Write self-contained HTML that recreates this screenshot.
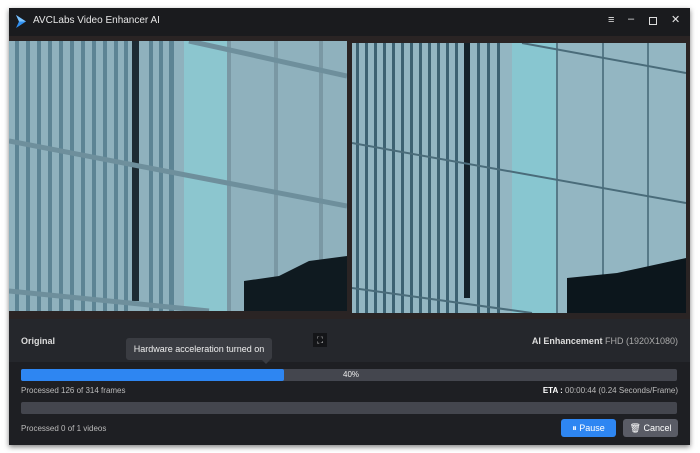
<!DOCTYPE html>
<html><head><meta charset="utf-8"><style>
body{margin:0;width:700px;height:453px;background:#fff;font-family:"Liberation Sans",sans-serif;position:relative;overflow:hidden}
.win{position:absolute;left:9px;top:8px;width:681px;height:437px;background:#1e1f23;box-shadow:0 2px 5px rgba(0,0,0,.5)}
.title{position:absolute;left:0;top:0;width:681px;height:28px;background:#1a1b1e;color:#e6e6e6;font-size:11px}
.t{position:absolute;font-size:9px;color:#ddd;white-space:nowrap}
.bar{position:absolute;left:12px;width:656px;height:12px;background:#44464e;border-radius:2px}
.btn{position:absolute;top:411px;height:18px;border-radius:3px;color:#fff;font-size:9px;line-height:18px;text-align:center}
</style></head><body>
<div class="win">
 <div class="title">
  <svg style="position:absolute;left:6px;top:7px" width="12" height="13" viewBox="0 0 12 13"><path d="M1 0 L11 6.5 L1 13 L4 6.5Z" fill="#2f8ff0"/><path d="M1 0 L11 6.5 L4 6.5Z" fill="#7cc4ff"/></svg>
  <span style="position:absolute;left:24px;top:7px;font-size:10px">AVCLabs Video Enhancer AI</span>
  <span style="position:absolute;left:599px;top:6px;font-size:11px">≡</span>
  <span style="position:absolute;left:619px;top:5px;font-size:11px">–</span>
  <span style="position:absolute;left:640px;top:9px;width:6px;height:6px;border:1.3px solid #ddd"></span>
  <span style="position:absolute;left:662px;top:5px;font-size:11px">✕</span>
 </div>
 <div style="position:absolute;left:0;top:28px;width:681px;height:283px;background:#2a2424"></div>
 <svg style="position:absolute;left:0;top:33px" width="338" height="270" viewBox="0 0 338 270">
  <rect width="338" height="270" fill="#8fb1bd"/>
  <g fill="#5d8494"><rect x="6" width="4" height="270"/><rect x="17" width="4" height="270"/><rect x="28" width="4" height="270"/><rect x="39" width="4" height="270"/><rect x="50" width="4" height="270"/><rect x="61" width="4" height="270"/><rect x="72" width="4" height="270"/><rect x="83" width="4" height="270"/><rect x="94" width="4" height="270"/><rect x="105" width="4" height="270"/><rect x="115" width="4" height="270"/><rect x="140" width="4" height="270"/><rect x="150" width="4" height="270"/><rect x="160" width="5" height="270"/></g>
  <rect x="123" width="7" height="260" fill="#1d2b33"/>
  <rect x="175" y="0" width="45" height="270" fill="#8cc6cf"/>
  <g fill="#7a98a4"><rect x="218" width="4" height="270"/><rect x="265" width="4" height="270"/><rect x="310" width="4" height="270"/></g>
  <path d="M0 100 L338 165 M0 250 L200 270 M180 0 L338 35" stroke="#6e8f9c" stroke-width="5"/>
  <path d="M235 270 L235 240 L270 235 L300 220 L338 215 L338 270Z" fill="#0f1a20"/>
 </svg>
 <svg style="position:absolute;left:343px;top:35px" width="334" height="270" viewBox="0 0 334 270">
  <rect width="334" height="270" fill="#93b6c2"/>
  <g fill="#3d6272"><rect x="4" width="3" height="270"/><rect x="13" width="3" height="270"/><rect x="22" width="3" height="270"/><rect x="31" width="3" height="270"/><rect x="40" width="3" height="270"/><rect x="49" width="3" height="270"/><rect x="58" width="3" height="270"/><rect x="67" width="3" height="270"/><rect x="76" width="3" height="270"/><rect x="85" width="3" height="270"/><rect x="94" width="3" height="270"/><rect x="103" width="3" height="270"/><rect x="125" width="3" height="270"/><rect x="135" width="3" height="270"/><rect x="145" width="3" height="270"/></g>
  <rect x="112" width="6" height="255" fill="#14222a"/>
  <rect x="160" y="0" width="45" height="270" fill="#88c6d0"/>
  <g fill="#577a88"><rect x="204" width="2" height="270"/><rect x="250" width="2" height="270"/><rect x="295" width="2" height="270"/></g>
  <path d="M0 100 L334 160 M170 0 L334 30 M0 245 L180 270" stroke="#4a6c7a" stroke-width="2"/>
  <path d="M215 270 L215 235 L265 230 L334 215 L334 270Z" fill="#0c161c"/>
 </svg>
 <div style="position:absolute;left:0;top:311px;width:681px;height:126px;background:#1e1f23"></div>
 <div style="position:absolute;left:0;top:311px;width:681px;height:43px;background:#25272c"></div>
 <span class="t" style="left:12px;top:328px;font-weight:bold">Original</span>
 <span style="position:absolute;left:304px;top:325px;width:14px;height:14px;background:#141518;color:#ccc;font-size:9px;text-align:center;line-height:14px">⛶</span>
 <span class="t" style="right:12px;top:328px"><b>AI Enhancement</b> <span style="color:#aaa">FHD (1920X1080)</span></span>
 <div style="position:absolute;left:117px;top:330px;width:146px;height:22px;background:#3a3c42;border-radius:3px;color:#eee;font-size:9px;line-height:22px;text-align:center">Hardware acceleration turned on</div>
 <div style="position:absolute;left:253px;top:352px;border:4px solid transparent;border-top-color:#3a3c42"></div>
 <div class="bar" style="top:361px"><div style="width:263px;height:12px;background:#2e86f2;border-radius:2px"></div><span style="position:absolute;left:322px;top:1px;font-size:8px;color:#eee">40%</span></div>
 <span class="t" style="left:12px;top:378px;font-size:8px;color:#bbb">Processed 126 of 314 frames</span>
 <span class="t" style="right:12px;top:378px;font-size:8px;color:#bbb"><b style="color:#fff">ETA :</b> 00:00:44 (0.24 Seconds/Frame)</span>
 <div class="bar" style="top:394px;height:12px"></div>
 <span class="t" style="left:12px;top:416px;font-size:8px;color:#bbb">Processed 0 of 1 videos</span>
 <div class="btn" style="left:552px;width:55px;background:#2e86f2">⏸ Pause</div>
 <div class="btn" style="left:614px;width:55px;background:#5a5c66">🗑 Cancel</div>
</div>
</body></html>
